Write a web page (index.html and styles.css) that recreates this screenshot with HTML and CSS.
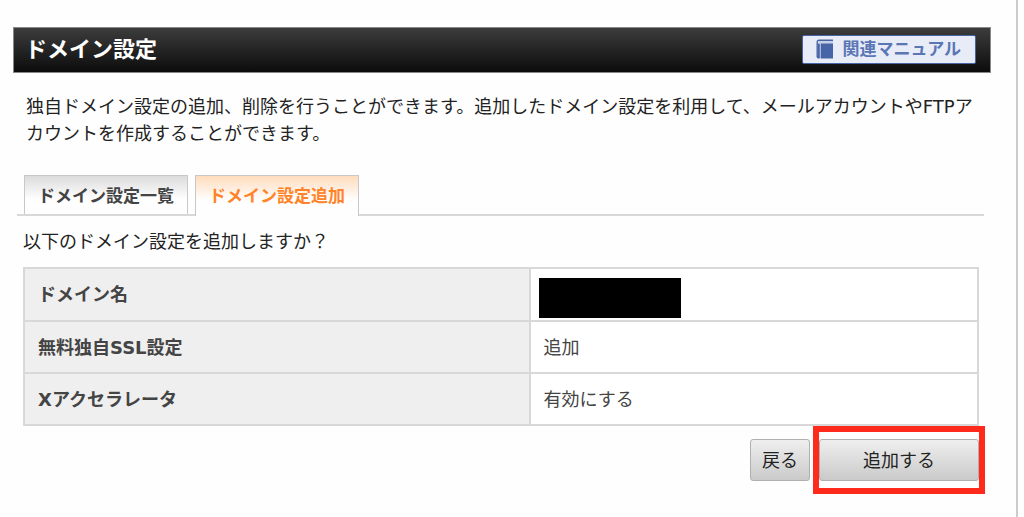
FILE: index.html
```
<!DOCTYPE html>
<html lang="ja">
<head>
    <meta charset="UTF-8">
    <meta name="viewport" content="width=device-width, initial-scale=1.0">
    <title>ドメイン設定</title>
    <link rel="stylesheet" href="styles.css">
</head>
<body>

<main class="panel">
    <header class="title-bar">
        <h1>ドメイン設定</h1>
        <a class="manual" href="#">
            <svg width="18" height="20" viewBox="0 0 18 20" aria-hidden="true">
                <path d="M17 1.2H3.2Q1.2 1.2 1.2 3.2V17.5Q1.2 18.8 3.5 18.8" fill="none" stroke="#4764a6" stroke-width="1.4"/>
                <path d="M2 4.4H3.8V19H2Z" fill="#4764a6"/>
                <path d="M4.6 4.4H17V19.5H4.6Z" fill="#4764a6"/>
                <path d="M3 3H17" stroke="#a5b2d4"/>
            </svg>
            関連マニュアル
        </a>
    </header>

    <p class="lead">独自ドメイン設定の追加、削除を行うことができます。追加したドメイン設定を利用して、メールアカウントやFTPアカウントを作成することができます。</p>

    <nav class="tabs">
        <a href="#list">ドメイン設定一覧</a>
        <a href="#add" class="active">ドメイン設定追加</a>
    </nav>

    <form class="confirm" id="add">
        <p>以下のドメイン設定を追加しますか？</p>

        <table>
            <tr>
                <th scope="row">ドメイン名</th>
                <td class="masked"><span class="mask"></span></td>
            </tr>
            <tr>
                <th scope="row">無料独自SSL設定</th>
                <td>追加</td>
            </tr>
            <tr>
                <th scope="row">Xアクセラレータ</th>
                <td>有効にする</td>
            </tr>
        </table>

        <div class="actions">
            <button type="button">戻る</button>
            <div class="highlight">
                <button type="submit" class="submit">追加する</button>
            </div>
        </div>
    </form>
</main>

</body>
</html>
```

FILE: styles.css
```
* { box-sizing: border-box; }
body { margin: 0; background: #fefefe; color: #222; font: 18px/27px "DejaVu Sans", "Noto Sans CJK JP", sans-serif; }
h1, p { margin: 0; }
a { text-decoration: none; }

.panel { min-height: 100vh; margin-right: 6px; padding: 27px 25px 22px 13px; border-right: 2px solid #ccc; }

.title-bar { display: flex; align-items: center; justify-content: space-between; height: 46px; padding: 0 14px 0 11px; border: 1px solid #888; background: linear-gradient(#3c3c3c, #0c0c0c); }
.title-bar h1 { color: #fff; font-size: 22px; line-height: 30px; }
.manual { display: flex; align-items: center; gap: 9px; height: 29px; margin-bottom: 2px; padding: 0 14px 0 13px; border: 1px solid #4764a6; border-radius: 2px; background: #e8ecf7; color: #5a76b5; font-size: 17px; font-weight: bold; }

.lead { margin: 20px 7px 0 13px; }

.tabs { display: flex; gap: 7px; margin: 28px 7px 0 4px; padding-left: 7px; border-bottom: 2px solid #d8d8d8; }
.tabs a { height: 39px; padding: 7px 13px 0; border: 1px solid #c8c8c8; border-bottom: 0; background: linear-gradient(#dcdcdc, #fefefe 60%); color: #444; font-size: 17px; font-weight: bold; }
.tabs .active { height: 41px; margin-bottom: -2px; background: linear-gradient(#ffdcbc, #fefefe 60%); color: #ff8429; }

.confirm { margin: 12px 12px 0 10px; }
table { width: 100%; margin-top: 12px; border-collapse: collapse; table-layout: fixed; }
th, td { height: 52px; padding: 0 13px; border: 2px solid #d8d8d8; color: #444; text-align: left; }
th { width: 53%; background: #efefef; }
td { background: #fff; }
.masked { height: 53px; padding: 9px 8px 0; vertical-align: top; }
.mask { display: block; width: 142px; height: 40px; background: #000; }

.actions { display: flex; justify-content: flex-end; gap: 9px; margin-top: 13px; }
button { height: 42px; padding: 0 11px; border: 1px solid #b0b0b0; border-radius: 3px; background: linear-gradient(#efefef, #cacaca); color: #222; font: inherit; cursor: pointer; }
.submit { width: 160px; }
.highlight { position: relative; }
.highlight::after { content: ""; position: absolute; inset: -13px -6px; border: 6px solid #ff2a1c; pointer-events: none; }
```
